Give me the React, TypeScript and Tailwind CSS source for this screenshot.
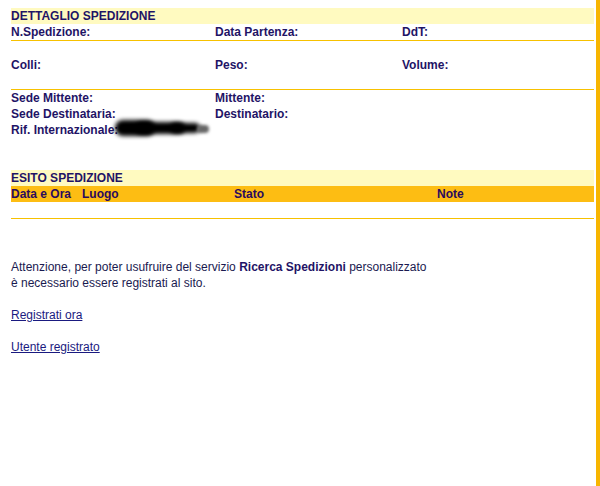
import React from 'react';

// Shipment detail page (Italian courier tracking)

const label = 'font-bold text-[#1f1466]';

export default function App() {
  return (
    <div className="flex min-h-[486px] w-[600px] bg-white text-[12px] leading-[16px] font-['Liberation_Sans',Arial,sans-serif]">
      <div className="w-[596px] pl-[11px] pr-[2px] pt-[8px]">
        {/* Dettaglio spedizione */}
        <div className={`h-[16px] bg-[#fffac0] ${label}`}>DETTAGLIO SPEDIZIONE</div>
        <div className="grid h-[17px] grid-cols-[204px_187px_1fr] border-b border-[#f7c100]">
          <span className={label}>N.Spedizione:</span>
          <span className={label}>Data Partenza:</span>
          <span className={label}>DdT:</span>
        </div>
        <div className="grid h-[49px] grid-cols-[204px_187px_1fr] items-center border-b border-[#f7c100]">
          <span className={label}>Colli:</span>
          <span className={label}>Peso:</span>
          <span className={label}>Volume:</span>
        </div>
        <div className="grid grid-cols-[204px_1fr]">
          <span className={label}>Sede Mittente:</span>
          <span className={label}>Mittente:</span>
          <span className={label}>Sede Destinataria:</span>
          <span className={label}>Destinatario:</span>
          <span className={`${label} relative`}>
            Rif. Internazionale:
            {/* redacted value */}
            <span className="absolute left-[104px] top-[-4px] h-[20px] w-[96px]">
              <span className="absolute left-[0px] top-[2px] h-[16px] w-[40px] rounded-full bg-black blur-[2px]" />
              <span className="absolute left-[20px] top-[4px] h-[12px] w-[50px] rounded-full bg-black blur-[2px]" />
              <span className="absolute left-[55px] top-[5px] h-[10px] w-[30px] rounded-full bg-black blur-[2px]" />
              <span className="absolute left-[82px] top-[7px] h-[8px] w-[12px] rounded-full bg-[#666] blur-[1.5px]" />
            </span>
          </span>
          <span />
        </div>

        {/* Esito spedizione */}
        <div className={`mt-[32px] h-[16px] bg-[#fffac0] ${label}`}>ESITO SPEDIZIONE</div>
        <div className="grid h-[16px] grid-cols-[71px_152px_203px_1fr] bg-[#fdbd13]">
          <span className="font-bold text-[#2a0a5e]">Data e Ora</span>
          <span className="font-bold text-[#2a0a5e]">Luogo</span>
          <span className="font-bold text-[#2a0a5e]">Stato</span>
          <span className="font-bold text-[#2a0a5e]">Note</span>
        </div>
        <div className="h-[17px] border-b border-[#f7c100]" />

        {/* Avviso registrazione */}
        <div className="mt-[40px] text-[#1a1a50]">
          <p>
            Attenzione, per poter usufruire del servizio <b className="text-[#1f1466]">Ricerca Spedizioni</b> personalizzato
            <br />è necessario essere registrati al sito.
          </p>
          <p className="mt-[16px]">
            <a href="#" className="text-[#1a1a80] underline">Registrati ora</a>
          </p>
          <p className="mt-[16px]">
            <a href="#" className="text-[#1a1a80] underline">Utente registrato</a>
          </p>
        </div>
      </div>
      <div className="w-[4px] bg-[#f7b500]" />
    </div>
  );
}
